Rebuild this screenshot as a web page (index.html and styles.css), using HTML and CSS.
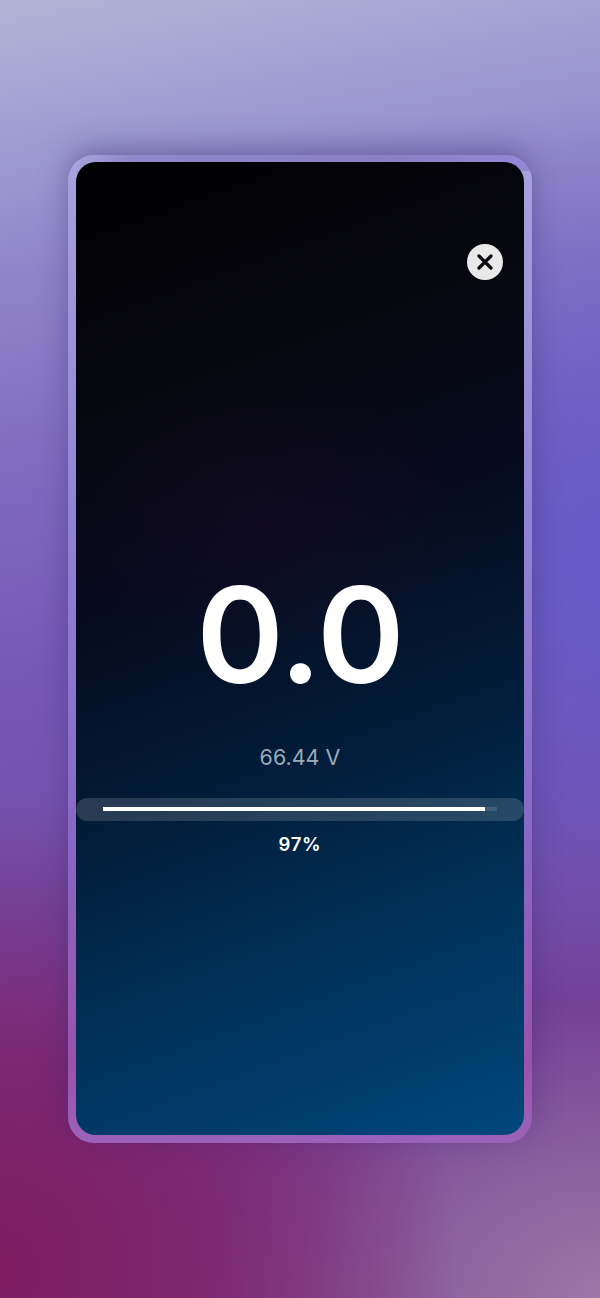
FILE: index.html
```html
<!DOCTYPE html>
<html lang="en">
<head>
<meta charset="utf-8">
<title>Battery voltage</title>
<link rel="stylesheet" href="styles.css">
</head>
<body>
<main class="frame">
  <section class="screen">
    <button class="close" aria-label="Close">
      <svg width="18" height="18" viewBox="0 0 18 18" aria-hidden="true"><path d="M3 3L15 15M15 3L3 15" fill="none" stroke="#0c0c10" stroke-width="3.2" stroke-linecap="round"/></svg>
    </button>
    <div class="reading">0.0</div>
    <div class="voltage">66.44 V</div>
    <div class="track-band">
      <div class="track"><div class="fill" style="width:97%"></div></div>
    </div>
    <div class="percent">97%</div>
  </section>
</main>
</body>
</html>
```
FILE: styles.css
```css
* { box-sizing: border-box; }
html, body { margin: 0; height: 100%; }
body {
  width: 600px;
  height: 1298px;
  overflow: hidden;
  display: flex;
  justify-content: center;
  padding-top: 155px;
  font-family: Inter, "Liberation Sans", sans-serif;
  background:
    radial-gradient(460px 480px at 0 1270px, #7f1c62 0%, rgba(127,28,98,.7) 45%, rgba(127,28,98,0) 100%),
    radial-gradient(400px 300px at 610px 1298px, #9c78a8 0%, rgba(156,120,168,.55) 45%, rgba(156,120,168,0) 100%),
    radial-gradient(340px 440px at 610px 560px, #675bc8 0%, rgba(103,91,200,0) 100%),
    linear-gradient(170deg, #b3b3d6 0%, #a3a2d4 8%, #8f84c8 20%, #7f6ac0 34%, #7658b8 48%, #7250ac 64%, #743f96 80%, #7a4690 100%);
}
.frame {
  width: 464px;
  height: 988px;
  padding: 7px 8px 8px;
  border-radius: 26px;
  background:
    linear-gradient(90deg, #aaa6de 0%, #9088c8 14%, #8a80c2 70%, #9488d8 100%) top / 100% 16px no-repeat,
    linear-gradient(180deg, #a8a2de 0%, #8f80d2 40%, #8868c6 68%, #9a52ac 92%, #9c62ba 100%);
  box-shadow: 0 -8px 30px -4px rgba(50, 40, 105, .5);
}
.screen {
  position: relative;
  height: 973px;
  border-radius: 20px;
  overflow: hidden;
  display: flex;
  flex-direction: column;
  align-items: center;
  padding-top: 395px;
  color: #fff;
  background:
    radial-gradient(220px 150px at 190px 360px, rgba(45,12,45,.25) 0%, rgba(45,12,45,0) 100%),
    linear-gradient(160deg, #000002 0%, #07080f 22%, #060a1c 40%, #021a36 58%, #012f55 76%, #00477c 100%);
}
.close {
  position: absolute;
  top: 82px;
  right: 21px;
  width: 36px;
  height: 36px;
  padding: 0;
  border: 0;
  border-radius: 50%;
  background: #e9e9e9;
  display: flex;
  align-items: center;
  justify-content: center;
}
.reading {
  font-size: 133px;
  font-weight: 600;
  line-height: 156px;
  letter-spacing: -1px;
}
.voltage {
  margin-top: 31px;
  font-size: 21.5px;
  line-height: 26px;
  color: #9aabb9;
}
.track-band {
  width: 100%;
  height: 23px;
  margin-top: 28px;
  border-radius: 12px;
  background: rgba(255, 255, 255, .15);
  padding: 9px 27px 0;
}
.track {
  height: 4px;
  background: rgba(255, 255, 255, .12);
}
.fill {
  height: 4px;
  background: #fff;
}
.percent {
  margin-top: 12px;
  font-size: 18.5px;
  line-height: 22px;
  font-weight: 600;
  letter-spacing: .7px;
}
```
